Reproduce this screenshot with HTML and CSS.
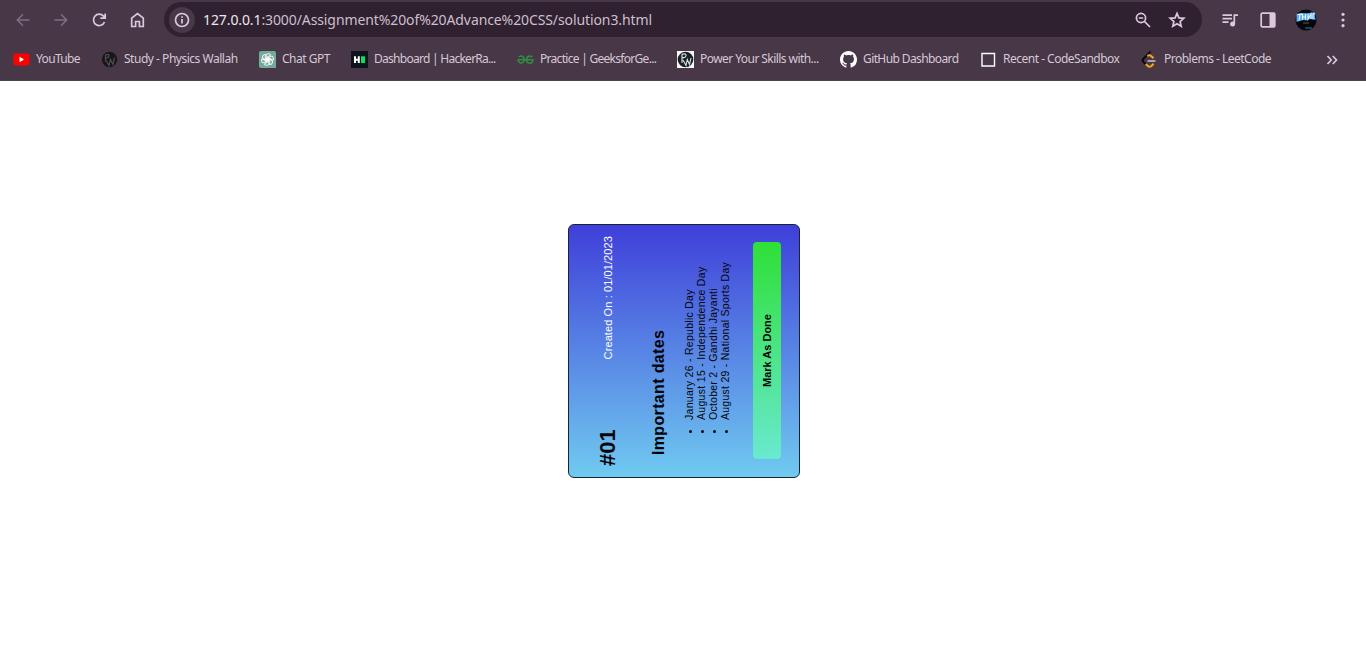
FILE: index.html
```html
<!DOCTYPE html>
<html lang="en">
<head>
<meta charset="utf-8">
<title>solution3.html</title>
<link rel="stylesheet" href="styles.css">
</head>
<body>
<header class="chrome">
  <div class="toolbar">
    <nav class="nav">
      <svg class="dim" width="18" height="18" viewBox="0 0 18 18"><path d="M15.5 9H3.5M9 3.3L3.3 9L9 14.7"/></svg>
      <svg class="dim" width="18" height="18" viewBox="0 0 18 18"><path d="M2.5 9H14.5M9 3.3L14.7 9L9 14.7"/></svg>
      <svg width="18" height="18" viewBox="0 0 18 18"><path d="M14.5 11A5.7 5.7 0 1 1 13.5 5.1L15 7M15.2 2.5V7.2H10.3"/></svg>
      <svg width="18" height="18" viewBox="0 0 18 18"><path d="M3.7 15.5V7.2L9.5 2.7L15.3 7.2V15.5H11.4V10.5H7.6V15.5Z"/></svg>
    </nav>
    <div class="omnibox">
      <span class="info"><svg width="18" height="18" viewBox="0 0 18 18"><circle cx="9" cy="9" r="6.5"/><path d="M9 8V12.5M9 5.2V6.8"/></svg></span>
      <span class="url"><b>127.0.0.1</b>:3000/Assignment%20of%20Advance%20CSS/solution3.html</span>
      <svg class="magnifier" width="18" height="18" viewBox="0 0 18 18"><circle cx="7" cy="7" r="4.6"/><path d="M10.5 10.5L16 16M4.8 7H9.2"/></svg>
      <svg width="18" height="18" viewBox="0 0 18 18"><path d="M9 2.4L10.9 6.9L15.8 7.3L12.1 10.5L13.2 15.3L9 12.7L4.8 15.3L5.9 10.5L2.2 7.3L7.1 6.9Z"/></svg>
    </div>
    <div class="actions">
      <svg width="18" height="18" viewBox="0 0 18 18"><path d="M1.5 4.2H11M1.5 7.7H11M1.5 11.2H7.5M13.3 13V4.2H17"/><circle class="solid" cx="11.6" cy="13" r="2.5"/></svg>
      <svg width="18" height="18" viewBox="0 0 18 18"><rect x="2.2" y="2.2" width="13.6" height="13.6" rx="1"/><path class="solid" d="M10.5 2H16V16H10.5Z"/></svg>
      <svg class="avatar" width="22" height="22" viewBox="0 0 22 22"><circle cx="11" cy="11" r="10.5" fill="#05070c"/><path d="M1.5 5.2L6 4L12 4.2L19.5 3.3L20.5 11L15 10L12 11.5L8 11L1.5 13Z" fill="#5aa9ea"/><path d="M2.5 5.5L7 5M5 5.5L4 11.5M7.5 5V11M10.5 5V10.5M7.5 8H10.5M13 5V10L16 5V10M18 4.5V10M18 4.5L20 5" fill="none" stroke="#e2f5ff" stroke-width="1.1"/><path d="M8 14H14" stroke="#59631f"/><path d="M10 19H17" stroke="#1688a5"/></svg>
      <svg width="18" height="18" viewBox="0 0 18 18"><g class="solid"><circle cx="9" cy="3.3" r="1.6"/><circle cx="9" cy="9" r="1.6"/><circle cx="9" cy="14.7" r="1.6"/></g></svg>
    </div>
  </div>
  <div class="bookmarks">
    <a class="bm youtube"><svg width="17" height="17" viewBox="0 0 17 17"><rect x=".3" y="2.5" width="16.2" height="12" rx="2.5" fill="#f00"/><path d="M6.5 5.8L11 8.5L6.5 11.2Z" fill="#fff"/></svg><span>YouTube</span></a>
    <a class="bm wallah"><svg width="17" height="17" viewBox="0 0 17 17"><circle cx="8.5" cy="8.5" r="7.7" fill="#171719"/><path d="M4.5 10.5V4Q8.5 2.5 8 5Q7.5 7 4.5 7M5 9.5L8 14.5L9.5 8.5L12 13.5L13.5 6.5" fill="none" stroke="#514c54" stroke-width="1.2"/></svg><span>Study - Physics Wallah</span></a>
    <a class="bm gpt"><svg width="17" height="17" viewBox="0 0 17 17"><path d="M2 0H15Q17 0 17 2V17H2Q0 17 0 15V2Q0 0 2 0Z" fill="#74aa9c"/><g fill="none" stroke="#fff" stroke-width=".9"><path d="M7.2 9.5V4.8Q7.2 2.6 9.4 2.6Q11 2.6 11.8 4L8 6.2V9"/><path d="M7.2 9.5V4.8Q7.2 2.6 9.4 2.6Q11 2.6 11.8 4L8 6.2V9" transform="rotate(60 8.5 8.5)"/><path d="M7.2 9.5V4.8Q7.2 2.6 9.4 2.6Q11 2.6 11.8 4L8 6.2V9" transform="rotate(120 8.5 8.5)"/><path d="M7.2 9.5V4.8Q7.2 2.6 9.4 2.6Q11 2.6 11.8 4L8 6.2V9" transform="rotate(180 8.5 8.5)"/><path d="M7.2 9.5V4.8Q7.2 2.6 9.4 2.6Q11 2.6 11.8 4L8 6.2V9" transform="rotate(240 8.5 8.5)"/><path d="M7.2 9.5V4.8Q7.2 2.6 9.4 2.6Q11 2.6 11.8 4L8 6.2V9" transform="rotate(300 8.5 8.5)"/></g></svg><span>Chat GPT</span></a>
    <a class="bm hacker"><svg width="17" height="17" viewBox="0 0 17 17"><path d="M0 0H17V17H0Z" fill="#0e141e"/><path d="M4 5.3V12M7.8 5.3V12M4 8.7H7.8" stroke="#fff" stroke-width="2"/><path d="M10 5.3H14V12H10Z" fill="#05e35e"/></svg><span>Dashboard | HackerRa...</span></a>
    <a class="bm geeks"><svg width="17" height="17" viewBox="0 0 17 17"><path d="M2 6Q4 4 6.3 6Q8 8.5 6.3 11Q4 13 2 11Q1 9.8 1.2 8.8H15.8Q16 12.2 12.8 12.2Q9.3 12 9.5 8.3Q9.9 5 13 5.1Q14.3 5.1 15.2 6" fill="none" stroke="#308d46" stroke-width="1.6"/></svg><span>Practice | GeeksforGe...</span></a>
    <a class="bm skills"><svg width="17" height="17" viewBox="0 0 17 17"><path d="M0 0H17V17H0Z" fill="#f7f7f7"/><circle cx="8.5" cy="8.5" r="7.8" fill="#182126"/><path d="M5 12V3.3Q9.7 2 9 5Q8.6 7 5.5 6.5M6 9L9 14.5L10.3 8.5L12.5 13.5L14 7" fill="none" stroke="#dce5e5" stroke-width="1.1"/></svg><span>Power Your Skills with...</span></a>
    <a class="bm github"><svg width="17" height="17" viewBox="0 0 16 16"><path fill="#fff" d="M8 0C3.58 0 0 3.58 0 8c0 3.54 2.29 6.53 5.47 7.59.4.07.55-.17.55-.38 0-.19-.01-.82-.01-1.49-2.01.37-2.53-.49-2.69-.94-.09-.23-.48-.94-.82-1.13-.28-.15-.68-.52-.01-.53.63-.01 1.08.58 1.23.82.72 1.21 1.87.87 2.33.66.07-.52.28-.87.51-1.07-1.78-.2-3.64-.89-3.64-3.95 0-.87.31-1.59.82-2.15-.08-.2-.36-1.02.08-2.12 0 0 .67-.21 2.2.82.64-.18 1.32-.27 2-.27s1.36.09 2 .27c1.53-1.04 2.2-.82 2.2-.82.44 1.1.16 1.92.08 2.12.51.56.82 1.27.82 2.15 0 3.07-1.87 3.75-3.65 3.95.29.25.54.73.54 1.48 0 1.07-.01 1.93-.01 2.2 0 .21.15.46.55.38A8.01 8.01 0 0 0 16 8c0-4.42-3.58-8-8-8Z"/></svg><span>GitHub Dashboard</span></a>
    <a class="bm sandbox"><svg width="17" height="17" viewBox="0 0 17 17"><path d="M2 2.5H14.5V15H2Z" fill="none" stroke="#fff" stroke-width="1.4"/></svg><span>Recent - CodeSandbox</span></a>
    <a class="bm leet"><svg width="17" height="17" viewBox="0 0 17 17"><path d="M9.5 .5L2.3 7.8Q1 9.4 2.3 10.9L5.2 13.6" fill="none" stroke="#090909" stroke-width="2"/><path d="M6.3 4.9Q8.5 3.5 10.4 5.2L12.5 7.2M4.8 13L6.8 15Q8.8 16.5 10.7 14.7L12.6 12.7" fill="none" stroke="#f4a51f" stroke-width="2"/><path d="M6.5 10H14.5" stroke="#b3b1b0" stroke-width="1.8"/></svg><span>Problems - LeetCode</span></a>
    <svg class="overflow" width="12" height="12" viewBox="0 0 12 12"><path d="M1.5 2L5.2 6L1.5 10M6.8 2L10.5 6L6.8 10"/></svg>
  </div>
</header>
<main class="page">
  <article class="card">
    <div class="card-head"><strong class="number">#01</strong><span class="created">Created On : 01/01/2023</span></div>
    <h1 class="title">Important dates</h1>
    <ul class="dates">
      <li class="jan">January 26 - Republic Day</li>
      <li class="ind">August 15 - Independence Day</li>
      <li class="oct">October 2 - Gandhi Jayanti</li>
      <li class="spo">August 29 - National Sports Day</li>
    </ul>
    <button class="done"><span>Mark As Done</span></button>
  </article>
</main>
</body>
</html>
```
FILE: styles.css
```css
* { box-sizing: border-box; }
body { margin: 0; height: 671px; overflow: hidden; display: flex; flex-direction: column; background: #fff; }
.chrome { height: 81px; flex: none; background: #473747; border-bottom: 1px solid #4d434a; color: #d6c8d6; font-family: "Noto Sans", sans-serif; }
.chrome svg { flex: none; display: block; }
.toolbar { height: 39px; padding-top: 2px; display: flex; align-items: flex-start; }
.nav { width: 164px; height: 35px; padding-left: 14px; display: flex; align-items: center; gap: 20px; }
.nav svg, .omnibox svg, .actions svg:not(.avatar), .overflow { fill: none; stroke: #dbc8dc; stroke-width: 1.7; }
.nav .dim { stroke: #806f80; stroke-width: 1.5; }
.omnibox { width: 1038px; height: 35px; padding: 0 16px 0 5px; border-radius: 18px; background: #2f212f; display: flex; align-items: center; }
.info { width: 26px; height: 26px; border-radius: 50%; background: #473947; display: flex; align-items: center; justify-content: center; }
.url { margin-left: 8px; font-size: 14px; line-height: 20px; letter-spacing: -.1px; white-space: nowrap; color: #cdbfcd; }
.url b { font-weight: 400; color: #f0e5f0; }
.magnifier { margin-left: auto; margin-right: 16px; }
.actions { height: 35px; margin-left: 19px; display: flex; align-items: center; gap: 20px; }
.actions .avatar { margin: 0 -2px; }
.actions .avatar + svg { margin-left: -1px; }
.actions svg .solid { fill: #dbc8dc; stroke: none; }
.bookmarks { height: 41px; padding-left: 13px; display: flex; align-items: center; }
.bm { flex: none; display: flex; align-items: center; gap: 6px; font-size: 12px; line-height: 18px; white-space: nowrap; }
.bm span { padding-bottom: 2px; }
.youtube { width: 88px; letter-spacing: -.65px; }
.wallah { width: 158px; letter-spacing: -.48px; }
.gpt { width: 92px; letter-spacing: -.5px; }
.hacker { width: 166px; letter-spacing: -.73px; }
.geeks { width: 160px; letter-spacing: -.71px; }
.skills { width: 163px; letter-spacing: -.56px; }
.github { width: 140px; letter-spacing: -.6px; }
.sandbox { width: 161px; letter-spacing: -.5px; }
.leet { width: 185px; letter-spacing: -.51px; }
.page { height: 590px; display: flex; justify-content: center; align-items: flex-start; padding: 154px 0 0 2px; font-family: "Liberation Sans", Arial, sans-serif; }
.card { width: 254px; height: 232px; flex: none; border: 1px solid #182337; border-radius: 6px; background: linear-gradient(90deg, #70caf0, #3f3fd9); transform: rotate(-90deg); color: #050508; }
.card-head { height: 78px; padding: 0 11px 0 11px; display: flex; justify-content: space-between; align-items: center; }
.number { font-size: 22px; line-height: 24px; }
.created { font-size: 11px; line-height: 14px; color: #fff; letter-spacing: .1px; }
.title { margin: 3px 0 0 22px; font-size: 16px; line-height: 18px; letter-spacing: .35px; white-space: nowrap; }
.dates { margin: 15px 0 0 57px; padding: 0; font-size: 10.5px; line-height: 12px; white-space: nowrap; }
.jan { letter-spacing: .28px; }
.ind { letter-spacing: .31px; }
.oct { letter-spacing: .24px; }
.spo { letter-spacing: .26px; }
.done { width: 217px; height: 28px; margin: 22px 0 0 18px; padding: 0; display: block; border: 0; border-radius: 4px; background: linear-gradient(90deg, #69e9d0, #2ee036); font: bold 11px/14px "Liberation Sans", Arial, sans-serif; color: #050805; }
```
